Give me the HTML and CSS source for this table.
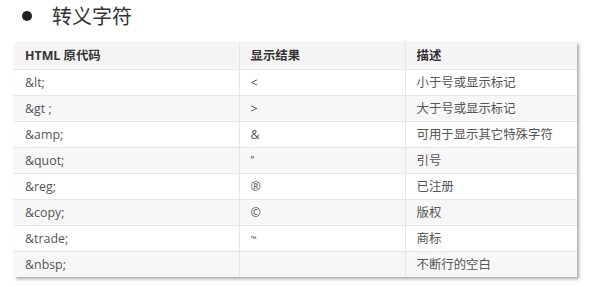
FILE: index.html
```html
<!DOCTYPE html>
<html lang="zh">
<head>
<meta charset="utf-8">
<link rel="stylesheet" href="styles.css">
</head>
<body>
<div class="page">
  <h2 class="title"><span class="dot"></span><span>转义字符</span></h2>
  <table class="ent">
    <thead>
      <tr><th class="c1">HTML 原代码</th><th class="c2">显示结果</th><th class="c3">描述</th></tr>
    </thead>
    <tbody>
      <tr><td>&amp;lt;</td><td>&lt;</td><td>小于号或显示标记</td></tr>
      <tr><td>&amp;gt ;</td><td>&gt;</td><td>大于号或显示标记</td></tr>
      <tr><td>&amp;amp;</td><td>&amp;</td><td>可用于显示其它特殊字符</td></tr>
      <tr><td>&amp;quot;</td><td class="q">&rdquo;</td><td>引号</td></tr>
      <tr><td>&amp;reg;</td><td>&reg;</td><td>已注册</td></tr>
      <tr><td>&amp;copy;</td><td>&copy;</td><td>版权</td></tr>
      <tr><td>&amp;trade;</td><td class="tm">&trade;</td><td>商标</td></tr>
      <tr><td>&amp;nbsp;</td><td></td><td>不断行的空白</td></tr>
    </tbody>
  </table>
</div>
</body>
</html>
```
FILE: styles.css
```css
html, body {
  margin: 0;
  padding: 0;
  background: #fff;
}
.page {
  width: 594px;
  height: 287px;
  overflow: hidden;
  padding: 0 0 0 14px;
  box-sizing: border-box;
  font-family: "Open Sans", "Noto Sans CJK SC", sans-serif;
}
.title {
  margin: 0;
  height: 32px;
  display: flex;
  align-items: center;
  gap: 20px;
  padding: 0 0 0 8px;
  font-weight: normal;
  font-size: 20px;
  color: #333;
  font-family: "Noto Sans CJK SC", sans-serif;
  line-height: 28px;
}
.dot {
  width: 10px;
  height: 10px;
  border-radius: 50%;
  background: #222;
}
.ent {
  margin-top: 10px;
  border-collapse: collapse;
  width: 563px;
  box-shadow: 2px 2px 3px #a8a8a8;
  font-size: 12.4px;
  color: #555;
}
.ent th, .ent td {
  text-align: left;
  padding: 0 11px;
  height: 26px;
  border-bottom: 1px solid #e6e6e6;
  border-right: 1px solid #e6e6e6;
  box-sizing: border-box;
}
.ent th {
  height: 27px;
  font-weight: bold;
  color: #333;
  background: #f5f5f5;
}
.ent th:last-child, .ent td:last-child { border-right: none; }
.ent tbody tr:last-child td { border-bottom: none; }
.c1 { width: 225px; }
.c2 { width: 166px; }
.ent tbody tr:nth-child(even) { background: #f7f7f7; }
.ent tbody tr:nth-child(odd) { background: #fff; }
.tm { font-size: 8px; }
.q { font-size: 10px; }
```
